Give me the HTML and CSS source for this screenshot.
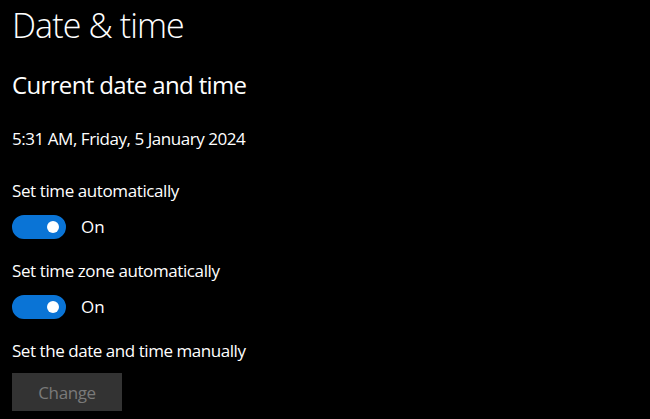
FILE: index.html
```html
<!DOCTYPE html>
<html lang="en">
<head>
    <meta charset="utf-8">
    <title>Date &amp; time</title>
    <link rel="stylesheet" href="styles.css">
</head>

<body>

    <div class="page">
        <h1 class="page-title">Date &amp; time</h1>

        <h2 class="section-title">Current date and time</h2>
        <p class="now">5:31 AM, Friday, 5 January 2024</p>

        <!-- auto time -->
        <div class="setting">
            <p class="setting-label">Set time automatically</p>
            <div class="toggle-row">
                <div class="toggle on"><div class="toggle-knob"></div></div>
                <span class="toggle-state">On</span>
            </div>
        </div>

        <!-- auto time zone -->
        <div class="setting">
            <p class="setting-label">Set time zone automatically</p>
            <div class="toggle-row">
                <div class="toggle on"><div class="toggle-knob"></div></div>
                <span class="toggle-state">On</span>
            </div>
        </div>

        <!-- manual -->
        <div class="setting manual">
            <p class="setting-label">Set the date and time manually</p>
            <button class="btn" disabled>Change</button>
        </div>
    </div>

</body>
</html>
```

FILE: styles.css
```css
* {
    margin: 0;
    padding: 0;
    box-sizing: border-box;
}

body {
    background: #000;
    color: #fff;
    font-family: "Open Sans", "Noto Sans", sans-serif;
}

.page {
    padding: 1px 12px 0;
}

.page-title {
    font-size: 34px;
    font-weight: 300;
    letter-spacing: -0.9px;
    line-height: 48px;
}

.section-title {
    margin-top: 20px;
    font-size: 24px;
    font-weight: 400;
    letter-spacing: -0.65px;
    line-height: 32px;
}

.now {
    margin-top: 26px;
    font-size: 17px;
    letter-spacing: -0.45px;
    line-height: 24px;
}

.setting {
    margin-top: 28px;
}

.setting + .setting {
    margin-top: 20px;
}

.setting-label {
    font-size: 17px;
    letter-spacing: -0.4px;
    line-height: 24px;
}

.manual .setting-label {
    letter-spacing: -0.45px;
}

        /* Toggle switch */

.toggle-row {
    display: flex;
    align-items: center;
    gap: 15px;
    margin-top: 12px;
    height: 24px;
}

.toggle {
    position: relative;
    width: 54px;
    height: 24px;
    border-radius: 12px;
    border: 2px solid #fff;
    background: transparent;
}

.toggle.on {
    background: #0a74d6;
    border-color: #0a74d6;
}

.toggle-knob {
    position: absolute;
    top: 4px;
    left: 4px;
    width: 12px;
    height: 12px;
    border-radius: 50%;
    background: #fff;
}

.toggle.on .toggle-knob {
    left: auto;
    right: 5px;
}

.toggle-state {
    font-size: 17px;
    line-height: 24px;
}

        /* Change button */

.manual .btn {
    margin-top: 10px;
}

.btn {
    display: block;
    width: 110px;
    height: 38px;
    border: none;
    background: #333;
    color: #7a7a7a;
    font-family: inherit;
    font-size: 17px;
    letter-spacing: -0.4px;
}
```
